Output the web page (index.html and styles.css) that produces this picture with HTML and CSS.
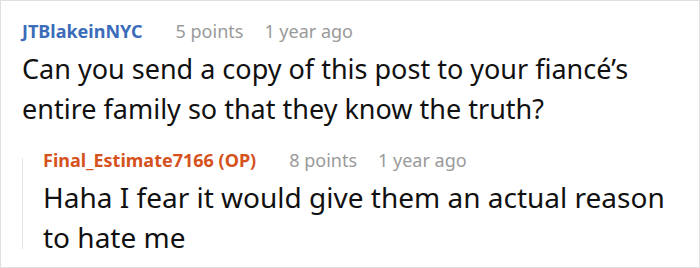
FILE: index.html
```html
<!DOCTYPE html>
<html>
<head>
<meta charset="utf-8">
<link rel="stylesheet" href="styles.css">
</head>
<body>
<div class="card">
  <div class="comment">
    <div class="meta">
      <span class="author author-blue">JTBlakeinNYC</span>
      <span class="info">5 points</span>
      <span class="info">1 year ago</span>
    </div>
    <p class="text">Can you send a copy of this post to your fiancé’s entire family so that they know the truth?</p>
  </div>
  <div class="reply">
    <div class="meta">
      <span class="author author-orange">Final_Estimate7166 (OP)</span>
      <span class="info">8 points</span>
      <span class="info">1 year ago</span>
    </div>
    <p class="text text-reply">Haha I fear it would give them an actual reason to hate me</p>
  </div>
</div>
</body>
</html>
```

FILE: styles.css
```css
html, body {
  margin: 0;
  padding: 0;
  background: #fff;
}
.card {
  box-sizing: border-box;
  width: 700px;
  height: 268px;
  border: 1px solid #e0e0e0;
  padding: 15px 20px 0 21px;
  font-family: "Noto Sans", sans-serif;
  color: #111;
}
.meta {
  display: flex;
  align-items: baseline;
  gap: 21px;
  font-size: 18px;
  line-height: 30px;
}
.author {
  font-weight: bold;
  margin-right: 12px;
}
.author-blue { color: #3b6cba; }
.author-orange { color: #d5521d; }
.info { color: #9a9a9a; }
.text {
  margin: 3px 0 0;
  font-size: 27px;
  line-height: 40px;
  color: #111;
}
.text-reply {
  font-size: 28px;
  margin-top: 2px;
}
.reply {
  position: relative;
  margin-top: 16px;
  padding-left: 21px;
}
.reply::before {
  content: "";
  position: absolute;
  left: 0;
  top: 13px;
  bottom: 8px;
  width: 1px;
  background: #e4e4e4;
}
```
